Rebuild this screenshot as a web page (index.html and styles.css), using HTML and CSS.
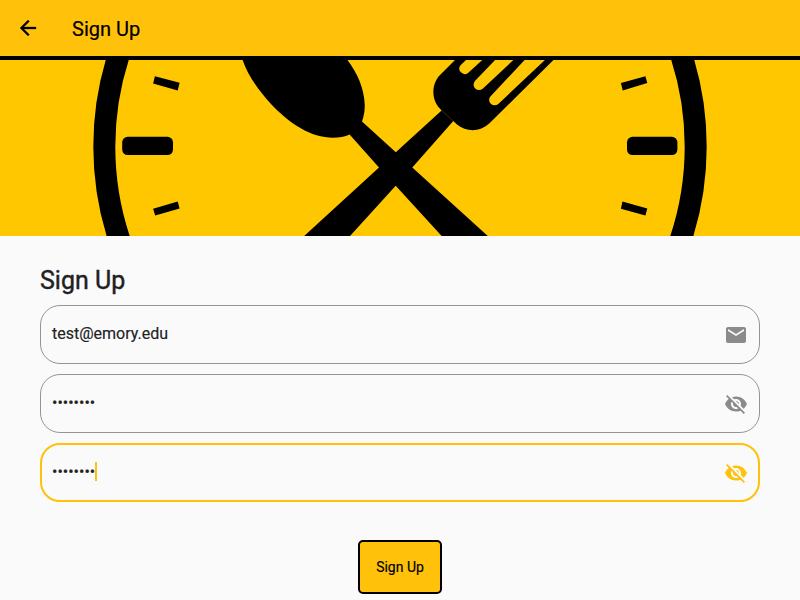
FILE: index.html
```html
<!DOCTYPE html>
<html lang="en">
<head>
<meta charset="utf-8">
<title>Sign Up</title>
<link rel="stylesheet" href="styles.css">
</head>
<body>
<header class="appbar">
  <svg class="icon back" viewBox="0 0 24 24" aria-hidden="true"><path d="M20 11H7.83l5.59-5.59L12 4l-8 8 8 8 1.41-1.41L7.83 13H20v-2z"/></svg>
  <span class="appbar-title">Sign Up</span>
</header>
<svg class="banner" viewBox="0 60 800 176" aria-hidden="true">
  <circle cx="400" cy="146.5" r="295.7" fill="none" stroke="#000" stroke-width="22"/>
  <rect x="122.2" y="136.8" width="50.8" height="18.2" rx="5.5"/>
  <rect x="627" y="136.8" width="50.4" height="18.2" rx="5.5"/>
  <path d="M154.9 76.300l24.700 6.500-1.900 7.700-24.600-7zM153.100 208.700l24.600-7.200 1.900 7-24.400 7zM620.900 83l24.500-6.800 1.900 6.800-24.600 7.500zM622.400 201.500l24.900 7-1.900 7-24.500-6.700z"/>
  <path d="M242 58C246 72 257 89 271 104C290 124 311 137.7 333 137.7C339 137.7 345 136.8 349.6 134.5L379 167.4L302 238H348.2L395.7 185.7L443.5 238H490L412.3 167.4L453.3 121L441.6 110.4L395.8 152.2L362 121.4C364 116 365 110 364.7 104C364 88 357 72 346 58Z"/>
  <path d="M457 58L440 75C431.500 84 431.500 98 438 106.500L441.600 110.400L453.300 121L457 124.500C467 132.500 480 132 489.500 123.300L555.500 58H547L498.300 104A5.500 5.500 0 0 1 490.400 96.400L526.500 58H515.500L482.700 88.800A5.500 5.500 0 0 1 474.900 81.100L497 58H484.500L467.800 73.200A5.500 5.500 0 0 1 460.300 65.500L468 58Z"/>
  <path d="M441.6 110.4L453.3 121" stroke="#2b2200" stroke-width=".6"/>
</svg>
<main class="form">
  <h1 class="heading">Sign Up</h1>
  <div class="field">
    <span class="value">test@emory.edu</span>
    <svg class="icon" viewBox="0 0 24 24" aria-hidden="true"><path d="M20 4H4c-1.100 0-1.990.9-1.990 2L2 18c0 1.100.9 2 2 2h16c1.100 0 2-.9 2-2V6c0-1.100-.9-2-2-2zm0 4l-8 5-8-5V6l8 5 8-5v2z"/></svg>
  </div>
  <div class="field">
    <span class="value">••••••••</span>
    <svg class="icon" viewBox="0 0 24 24" aria-hidden="true"><path d="M12 7c2.760 0 5 2.240 5 5 0 .65-.13 1.260-.36 1.830l2.920 2.920c1.510-1.260 2.700-2.890 3.430-4.750-1.730-4.390-6-7.500-11-7.500-1.400 0-2.740.25-3.980.7l2.160 2.160C10.740 7.130 11.350 7 12 7zM2 4.270l2.280 2.280.46.46C3.080 8.300 1.780 10.020 1 12c1.730 4.390 6 7.500 11 7.500 1.550 0 3.030-.3 4.380-.84l.42.42L19.730 22 21 20.730 3.270 3 2 4.270zM7.530 9.800l1.550 1.550c-.05.21-.08.43-.08.65 0 1.660 1.340 3 3 3 .22 0 .44-.03.65-.08l1.550 1.550c-.67.33-1.410.53-2.200.53-2.760 0-5-2.240-5-5 0-.79.2-1.530.53-2.200zm4.310-.78l3.150 3.150.02-.16c0-1.660-1.340-3-3-3l-.17.01z"/></svg>
  </div>
  <div class="field focused">
    <span class="value">••••••••</span><span class="caret"></span>
    <svg class="icon" viewBox="0 0 24 24" aria-hidden="true"><path d="M12 7c2.760 0 5 2.240 5 5 0 .65-.13 1.260-.36 1.830l2.920 2.920c1.510-1.260 2.700-2.890 3.430-4.750-1.730-4.390-6-7.500-11-7.500-1.400 0-2.740.25-3.980.7l2.160 2.160C10.740 7.130 11.350 7 12 7zM2 4.270l2.280 2.280.46.46C3.080 8.300 1.780 10.020 1 12c1.730 4.390 6 7.500 11 7.500 1.550 0 3.030-.3 4.380-.84l.42.42L19.730 22 21 20.730 3.270 3 2 4.270zM7.530 9.800l1.550 1.550c-.05.21-.08.43-.08.65 0 1.660 1.340 3 3 3 .22 0 .44-.03.65-.08l1.550 1.550c-.67.33-1.410.53-2.200.53-2.760 0-5-2.240-5-5 0-.79.2-1.530.53-2.200zm4.310-.78l3.150 3.150.02-.16c0-1.660-1.340-3-3-3l-.17.01z"/></svg>
  </div>
  <button class="submit">Sign Up</button>
</main>
</body>
</html>
```
FILE: styles.css
```css
* { box-sizing: border-box; }
body {
  margin: 0;
  height: 600px;
  overflow: hidden;
  background: #fafafa;
  color: #212121;
  font-family: Roboto, sans-serif;
}
.icon {
  width: 24px;
  height: 24px;
  flex: none;
  fill: currentColor;
}
.back {
  stroke: currentColor;
  stroke-width: .3;
}
.appbar {
  display: flex;
  align-items: center;
  gap: 32px;
  height: 60px;
  padding: 0 16px;
  background: #ffc10a;
  border-bottom: 4px solid #000;
  color: #000;
}
.appbar-title {
  font-size: 20px;
  line-height: 24px;
  padding-top: 2px;
  -webkit-text-stroke: .2px #000;
}
.banner {
  display: block;
  width: 800px;
  height: 176px;
  background: #ffc700;
}
.form {
  display: flex;
  flex-direction: column;
  padding: 30px 40px 0;
}
.heading {
  margin: 0 0 9px;
  font-size: 25px;
  font-weight: 400;
  line-height: 30px;
  -webkit-text-stroke: .4px #212121;
}
.field {
  display: flex;
  align-items: center;
  height: 59px;
  margin-bottom: 10px;
  padding: 0 11px;
  border: 1px solid #949494;
  border-radius: 20px;
  font-size: 16px;
  color: #8b8b8b;
}
.value {
  color: #212121;
  line-height: 20px;
  padding-bottom: 2px;
  -webkit-text-stroke: .15px #212121;
}
.field .icon { margin-left: auto; }
.focused {
  border: 2px solid #ffc10a;
  padding: 0 10px;
  color: #ffc10a;
}
.caret {
  width: 2px;
  height: 19px;
  margin-bottom: 2px;
  background: #ffc10a;
}
.submit {
  align-self: center;
  width: 84px;
  height: 54px;
  margin-top: 28px;
  padding: 0;
  border: 2px solid #000;
  border-radius: 5px;
  background: #ffc10a;
  color: #000;
  font: 400 14px Roboto, sans-serif;
  -webkit-text-stroke: .15px #000;
}
```
